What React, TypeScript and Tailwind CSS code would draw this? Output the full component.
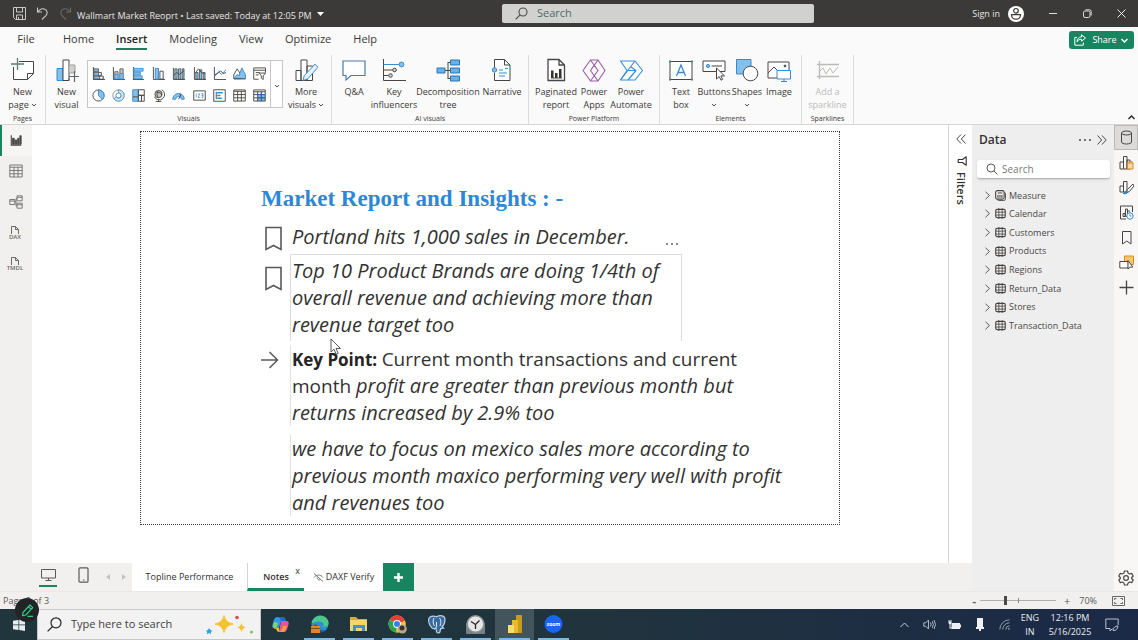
import React, { useState } from 'react';
import type { ReactNode } from 'react';

const DARK = '#484644';
const BLUE = '#3a8bc9';
const LIGHT = '#83c0ee';

type IconProps = { size?: number; box?: number; children: ReactNode };

function Icon({ size = 14, box = 14, children }: IconProps) {
  return (
    <svg
      width={size}
      height={size}
      viewBox={`0 0 ${box} ${box}`}
      fill="none"
      stroke={DARK}
      strokeWidth={1}
      aria-hidden="true"
      className="block shrink-0"
    >
      {children}
    </svg>
  );
}

function Chevron({ size = 6, className = '' }: { size?: number; className?: string }) {
  return (
    <svg width={size} height={size} viewBox="0 0 6 6" fill="none" stroke="currentColor" strokeWidth={0.9} aria-hidden="true" className={className}>
      <path d="M1 2l2 2 2-2" />
    </svg>
  );
}

/* ---------- Title bar ---------- */

function TitleBar() {
  return (
    <header className="flex h-[27px] items-center bg-[#3b3a38] text-[9px] text-[#e6e5e4]">
      <div className="flex w-[502px] shrink-0 items-center">
        <button aria-label="Save" className="ml-3 flex w-[14px] justify-center">
          <svg width="13" height="13" viewBox="0 0 13 13" fill="none" stroke="#c9c8c6" strokeWidth="1">
            <path d="M.5.5h12v12h-10l-2-2zM3.5.5v4.5h6V.5M3.5 12.500v-4.500h6v4.500M5.500 10v2" />
          </svg>
        </button>
        <button aria-label="Undo" className="ml-[9px] flex w-[14px] justify-center">
          <svg width="13" height="13" viewBox="0 0 13 13" fill="none" stroke="#c9c8c6" strokeWidth="1.1">
            <path d="M1.500.5v4.500H6M1.800 4.800C3.500 2 7 .8 9.500 2.600c2.400 1.800 2 4.400.2 6.200L6 12.500" />
          </svg>
        </button>
        <button aria-label="Redo" className="ml-[9px] flex w-[14px] justify-center">
          <svg width="13" height="13" viewBox="0 0 13 13" fill="none" stroke="#6b6a68" strokeWidth="1.1">
            <path d="M11.500.5v4.500H7M11.200 4.800C9.500 2 6 .8 3.500 2.600c-2.400 1.800-2 4.400-.2 6.200L7 12.500" />
          </svg>
        </button>
        <button className="ml-[5px] flex items-center whitespace-nowrap pt-1">
          Wallmart Market Reoprt • Last saved: Today at 12:05 PM
          <svg width="7" height="4" viewBox="0 0 7 4" className="mb-1 ml-[5px]" aria-hidden="true">
            <path d="M0 0h7L3.500 4z" fill="#fff" />
          </svg>
        </button>
      </div>
      <label className="flex h-[19px] w-[312px] items-center rounded-[2px] bg-[#d1d2cf] pl-[13px] text-[#5a5958]">
        <svg width="13" height="13" viewBox="0 0 13 13" fill="none" stroke="#4a4948" strokeWidth="1.1" aria-hidden="true">
          <circle cx="8" cy="5" r="4" />
          <path d="M5.100 7.900L.6 12.400" />
        </svg>
        <input
          aria-label="Search"
          placeholder="Search"
          className="ml-[9px] min-w-0 flex-1 bg-transparent text-[11px] outline-none placeholder:text-[#4f6a66]"
        />
      </label>
      <div className="ml-auto flex items-center">
        <button className="text-[9px]">Sign in</button>
        <button aria-label="Account" className="ml-2">
          <svg width="16" height="16" viewBox="0 0 16 16" fill="none" stroke="#3b3a38" strokeWidth="1.2" className="block">
            <circle cx="8" cy="8" r="8" fill="#fff" stroke="none" />
            <circle cx="8" cy="4.800" r="2.300" />
            <path d="M3.500 8.700h9c0 2.700-1.900 4.500-4.500 4.500s-4.500-1.800-4.500-4.500z" />
          </svg>
        </button>
        <button aria-label="Minimize" className="ml-3 flex w-[34px] justify-center">
          <span className="block h-px w-2 bg-[#dddcdb]" />
        </button>
        <button aria-label="Restore" className="flex w-[34px] justify-center">
          <svg width="9" height="9" viewBox="0 0 9 9" fill="none" stroke="#dddcdb">
            <rect x=".5" y="2" width="6.500" height="6.500" rx="1.500" />
            <path d="M2.500.8h4q1.700 0 1.700 1.700v4" />
          </svg>
        </button>
        <button aria-label="Close" className="flex w-[34px] justify-center">
          <svg width="9" height="9" viewBox="0 0 9 9" fill="none" stroke="#f0efee">
            <path d="M.5.5l8 8M8.500.5l-8 8" />
          </svg>
        </button>
      </div>
    </header>
  );
}

/* ---------- Menu ---------- */

const MENU = ['Home', 'Insert', 'Modeling', 'View', 'Optimize', 'Help'];

function MenuBar() {
  const [active, setActive] = useState('Insert');
  return (
    <nav className="flex h-[26px] items-center bg-[#fafafa] text-[11px] text-[#3a3938]">
      <button className="w-[52px] border-b-2 border-transparent text-center leading-[18px]">File</button>
      {MENU.map((m) => (
        <button key={m} onClick={() => setActive(m)} className="px-[11px]">
          <span
            className={
              m === active
                ? 'block border-b-2 border-[#1a7f5a] leading-[18px] font-semibold text-[#252423]'
                : 'block border-b-2 border-transparent leading-[18px]'
            }
          >
            {m}
          </span>
        </button>
      ))}
      <button className="mr-1 ml-auto flex h-[18px] w-[65px] items-center justify-center gap-[6px] rounded-[3px] bg-[#178560] text-[9px] text-white">
        <svg width="12" height="12" viewBox="0 0 12 12" fill="none" stroke="#fff" aria-hidden="true">
          <path d="M3 3.500H.8v7.700h8.500V8.500M7.500.8l4 3.200-4 3.200V5.300C5.500 5.200 4 6 3 7.800c.3-3 1.800-4.800 4.500-5z" strokeLinejoin="round" />
        </svg>
        Share
        <Chevron size={9} className="-ml-[3px]" />
      </button>
    </nav>
  );
}

/* ---------- Ribbon ---------- */

function Tool({ icon, lines, width, drop, disabled }: { icon: ReactNode; lines: string[]; width: string; drop?: boolean; disabled?: boolean }) {
  return (
    <button
      disabled={disabled}
      className={`flex shrink-0 flex-col items-center whitespace-nowrap text-[9px] leading-[13px] ${width} ${disabled ? 'text-[#bdbcbb]' : 'text-[#3a3938]'}`}
    >
      <span className="mb-[3px] block">{icon}</span>
      <span>{lines[0]}</span>
      {(lines[1] || drop) && (
        <span className="flex h-[13px] items-center gap-[2px]">
          {lines[1]}
          {drop && <Chevron size={6} />}
        </span>
      )}
    </button>
  );
}

function Group({ label, children, width, pad = '' }: { label: string; children: ReactNode; width: string; pad?: string }) {
  return (
    <section className={`mt-[2px] flex shrink-0 flex-col justify-between border-r border-[#dcdbda] ${width}`}>
      <div className={`flex items-start pt-[3px] ${pad}`}>{children}</div>
      <h2 className="text-center text-[7px] leading-[11px] text-[#3a3938]">{label}</h2>
    </section>
  );
}

const GALLERY: { name: string; art: ReactNode }[] = [
  { name: 'Stacked bar chart', art: <><path d="M1.500 0v13.500H14" /><path d="M2 2h5v3H2zM2 6h8v3H2zM2 10h10v3H2z" fill={LIGHT} stroke={DARK} strokeWidth=".8" /><path d="M7 6h3v3H7zM8 10h4v3H8z" fill="#fff" strokeWidth=".8" /></> },
  { name: 'Stacked column chart', art: <><path d="M1.500 0v13.500H14" /><path d="M3 5h3.500v8H3zM8.500 2H12v11H8.500z" fill="#c8c6c4" strokeWidth=".8" /><path d="M3 8h3.500v5H3zM8.500 7H12v6H8.500z" fill={LIGHT} stroke={BLUE} strokeWidth=".8" /></> },
  { name: 'Clustered bar chart', art: <><path d="M1.500 0v14" /><path d="M2 1.500h10v3H2zM2 5.500h7v3H2zM2 9.500h9v3H2z" fill={LIGHT} stroke={BLUE} strokeWidth=".9" /><path d="M1.500 13.500H13" /></> },
  { name: 'Clustered column chart', art: <><path d="M1.500 0v13.500H14" /><path d="M3.500 1.500H7V13H3.500z" fill={LIGHT} stroke={BLUE} /><path d="M8.500 4.500H12V13H8.500z" fill="#fff" /></> },
  { name: '100% stacked column chart', art: <><path d="M1.500 1v12.500H14" /><path d="M3 2h2.500v11H3zM7 2h2.500v11H7zM11 2h2v11h-2z" fill={LIGHT} strokeWidth=".8" /><path d="M2 9l3-3 3 2 5-4" /></> },
  { name: 'Line and column chart', art: <><path d="M1.500 0v13.500H14" /><path d="M3 6h2.500v7H3zM7 3h2.500v10H7zM11 6h2v7h-2z" fill={LIGHT} strokeWidth=".8" /><path d="M2 7l4-5 3 4 4 1" /></> },
  { name: 'Line chart', art: <><path d="M1.500 0v13.500H14" /><path d="M2 10l4-5 3 3 5-5" stroke={BLUE} /><path d="M2 8l3-1 3-3 3 3 3-1" /></> },
  { name: 'Area chart', art: <><path d="M.8 12.500v-4L4.500 2 8 7.500v5z" fill="#fff" strokeLinejoin="round" /><path d="M1 12.500L4.500 8l2 1.500L9.500 1l4 7.500v4z" fill={LIGHT} stroke={BLUE} strokeLinejoin="round" /><path d="M1 12.800h12.500" /></> },
  { name: 'Slicer', art: <><path d="M13.500 6V1H.8v12.200H6M.8 3.500h12.700M3 6h4M3 8.500h3" /><path d="M6.500 6.500h7L11 9.500v4L9 12V9.500z" fill="#fff" /></> },
  { name: 'Pie chart', art: <><circle cx="7" cy="7" r="6" fill="#fff" /><path d="M7 1v6l4.200 4.300A6 6 0 0 0 7 1z" fill={LIGHT} stroke={BLUE} /></> },
  { name: 'Donut chart', art: <><circle cx="7" cy="7" r="6" stroke="#8a8886" /><circle cx="7" cy="7" r="2.800" stroke={BLUE} /><path d="M7 1a6 6 0 1 1-5 9.300l2.600-1.700A2.900 2.900 0 1 0 7 4.200z" stroke={BLUE} fill="#d4e9f8" strokeWidth=".8" /></> },
  { name: 'Treemap', art: <><path d="M.8.8h6v12.400h-6z" fill={LIGHT} stroke={BLUE} /><path d="M6.800.8h6.400v6H6.800zM6.800 6.800h3.400v6.400H6.800zM10.200 6.800h3v6.400h-3zM.8 8.500h6" /></> },
  { name: 'Map', art: <><circle cx="7" cy="5.500" r="3.900" fill="#c8c6c4" /><path d="M7 1.600c-2.200 2.300-2 5.500 0 7.800M5 4h4l1.500 2.500" /><path d="M10.500.8a5.800 5.800 0 1 1-8 7.500M7 11v2.300M4 13.400h6" /></> },
  { name: 'Gauge', art: <><path d="M.8 11a6.200 6.200 0 0 1 12.400 0H10a3 3 0 0 0-6 0z" fill={LIGHT} stroke={BLUE} /><path d="M7 11l2.500-4.500M8.500 4.900l.8 2.800" /></> },
  { name: 'Card', art: <><path d="M.8 2h12.400v10H.8z" /><path d="M3.500 5v4M5.500 5.200h1.700L5.500 9h2M9 5h1.800v4H9M9.200 7h1.600" stroke={BLUE} strokeWidth=".8" /></> },
  { name: 'Multi-row card', art: <><path d="M.8.8h12.400v12.400H.8zM3.500 3v8" /><path d="M4.500 4h6M4.500 7h3.500M4.500 10h5" stroke={BLUE} strokeWidth="1.600" /></> },
  { name: 'Table', art: <path d="M.8 1h12.400v12H.8zM.8 2.500h12.400M.8 6h12.400M.8 9.500h12.400M5 2.500V13M9 2.500V13" /> },
  { name: 'Matrix', art: <><path d="M5 6h8v7H5z" fill={LIGHT} stroke="none" /><path d="M.8 1h12.400v12H.8zM.8 3h12.400M.8 6h12.400M.8 9.500h12.400M5 2.500V13M9 2.500V13" /><path d="M5 6h8M9 4v9M5 9.500h8" stroke="#1f6db5" /></> },
];

function Gallery() {
  return (
    <div className="mt-[2px] flex h-[48px] w-[196px] shrink-0 border border-[#c8c6c4] bg-white">
      <div className="grid flex-1 grid-cols-9 py-px">
        {GALLERY.map((g) => (
          <button key={g.name} aria-label={g.name} className="flex items-center justify-center">
            <Icon size={13}>{g.art}</Icon>
          </button>
        ))}
      </div>
      <button aria-label="More gallery items" className="flex w-3 items-center justify-center border-l border-[#c8c6c4] pt-1 text-[#3a3938]">
        <Chevron size={6} />
      </button>
    </div>
  );
}

function Ribbon() {
  return (
    <div className="flex h-[72px] items-stretch border-b border-[#d6d5d4] bg-[#fafafa]">
      <Group label="Pages" width="w-[46px]">
        <Tool width="w-[45px]" lines={['New', 'page']} drop icon={
          <Icon size={24} box={24}><path d="M8 3.500h14.500v12l-6 6h-14V9" fill="#fff" /><path d="M22.500 15.500h-6v6" /><path d="M6.500 0v12M0 6h13" stroke="#5d7c73" strokeWidth="1.300" /></Icon>
        } />
      </Group>
      <Group label="Visuals" width="w-[286px]">
        <Tool width="w-[41px]" lines={['New', 'visual']} icon={
          <Icon size={24} box={24}><path d="M2 10.500h6v12H2z" fill={LIGHT} stroke={BLUE} /><path d="M8 2h6v20.500H8z" fill="#fff" /><path d="M14 7h6v8h-6z" fill="#d2d0ce" stroke="#a19f9d" /><path d="M14 20v2.500M19.500 13v11M14 18.500h10" stroke="#5d6a70" strokeWidth="1.200" /></Icon>
        } />
        <Gallery />
        <Tool width="w-[46px]" lines={['More', 'visuals']} drop icon={
          <Icon size={24} box={24}><path d="M2 12.500h5v10H2zM7 2h6v20.500H7zM13 8h5.500v14.500H13z" fill="#fff" /><path d="M9 22.500l1.300-5L21 6.200l3 3L13.800 20.800z" fill="#e4f1fb" stroke={BLUE} /></Icon>
        } />
      </Group>
      <Group label="AI visuals" width="w-[197px]" pad="pl-[2px]">
        <Tool width="w-[40px]" lines={['Q&A']} icon={
          <Icon size={24} box={24}><path d="M1 3h22v14.500H9l-5 4.500v-4.500H1z" fill="#fff" stroke="#4a7ba6" strokeWidth="1.200" /></Icon>
        } />
        <Tool width="w-[40px]" lines={['Key', 'influencers']} icon={
          <Icon size={24} box={24}><path d="M1.500 1v21.500H24" /><path d="M1.500 6.500h16" stroke={BLUE} /><circle cx="19.500" cy="6.500" r="2.400" fill={LIGHT} stroke={BLUE} /><path d="M1.500 12h9M1.500 17.500h5" /><circle cx="12.500" cy="12" r="1.800" fill="#d2d0ce" /><circle cx="8.500" cy="17.500" r="1.800" fill="#d2d0ce" /></Icon>
        } />
        <Tool width="w-[68px]" lines={['Decomposition', 'tree']} icon={
          <Icon size={24} box={24}><path d="M8 12.500h7M12 4v17M12 4.500h3M12 20.500h3" /><path d="M1 10h8v5H1zM14.500 2h9v5h-9zM14.500 10h9v5h-9zM14.500 18h9v5h-9z" fill="#6ab1e8" stroke="#2b76b5" /></Icon>
        } />
        <Tool width="w-[40px]" lines={['Narrative']} icon={
          <Icon size={24} box={24}><path d="M4.500 10V1.500h10l5.500 5.500v15.500H4.500V15M14.500 1.500V7H20" fill="#fff" /><circle cx="4.500" cy="12" r="2.200" fill={LIGHT} stroke={BLUE} /><path d="M9 12h4M15 10.500h3M9 15h8M9 18h6" stroke={BLUE} /></Icon>
        } />
      </Group>
      <Group label="Power Platform" width="w-[131px]" pad="pl-[5px]">
        <Tool width="w-[44px]" lines={['Paginated', 'report']} icon={
          <Icon size={24} box={24}><path d="M4 1.500h11l5.500 5.500v15.500H4zM15 1.500V7h5.500" fill="#fff" strokeWidth="1.300" /><path d="M7 12.500h2.500V20H7zM11 15h2.500v5H11zM15 11h2.500v9H15z" fill="#323130" stroke="none" /><path d="M7 20h11" /></Icon>
        } />
        <Tool width="w-[32px]" lines={['Power', 'Apps']} icon={
          <Icon size={24} box={24}><g stroke="#9b59a6" strokeWidth="1.100" strokeLinejoin="round"><path d="M8.500 2h7.500l7 10.500-7 10.500H8.500L1 12.500z" /><path d="M8.500 2l7.500 10.500L8.500 23M16 2L8.500 12.500 16 23M12.200 7.300l3.800 5.200-3.800 5.200-3.700-5.200z" /></g></Icon>
        } />
        <Tool width="w-[42px]" lines={['Power', 'Automate']} icon={
          <Icon size={24} box={24}><g stroke="#3a93d8" strokeWidth="1.200" strokeLinejoin="round"><path d="M1.500 3H16l7.500 9.500L16 22H1.500L8 12.500z" /><path d="M16 3L1.500 22M8 12.500h8M12 9l5 3.500L9 22" /></g></Icon>
        } />
      </Group>
      <Group label="Elements" width="w-[142px]" pad="pl-[5px]">
        <Tool width="w-[32px]" lines={['Text', 'box']} icon={
          <Icon size={24} box={24}><path d="M1 3.500h22v18H1z" fill="#fff" /><path d="M7.500 18L12 7l4.500 11M9 14.500h6" stroke={BLUE} strokeWidth="1.300" /><path d="M0 2.500h2v2H0zM22 2.500h2v2h-2zM0 20.500h2v2H0zM22 20.500h2v2h-2z" fill="#4f7f8f" stroke="none" /></Icon>
        } />
        <Tool width="w-[34px]" lines={['Buttons']} drop icon={
          <Icon size={24} box={24}><path d="M1 3h22v10.500H1z" fill="#fff" /><circle cx="6" cy="8" r="1.600" fill={LIGHT} stroke={BLUE} /><path d="M9.500 8H20" /><path d="M14.500 10v11l2.700-2.500 1.800 3.700 1.600-.8-1.700-3.500h3.600z" fill="#fff" /></Icon>
        } />
        <Tool width="w-[32px]" lines={['Shapes']} drop icon={
          <Icon size={24} box={24}><path d="M1.500 1.500h14.500v14.500H1.500z" fill={LIGHT} stroke={BLUE} /><circle cx="15.500" cy="15.500" r="7.300" fill="#fff" /></Icon>
        } />
        <Tool width="w-[32px]" lines={['Image']} icon={
          <Icon size={24} box={24}><path d="M1 4h21v16H1z" fill="#fff" /><path d="M1 15l6-6 7 7" /><circle cx="18" cy="8" r=".9" fill={DARK} /><path d="M10 12.500h13.500v8.500H10zM14 23.500h6M17 21v2.500" fill="#fff" stroke={BLUE} /></Icon>
        } />
      </Group>
      <Group label="Sparklines" width="w-[52px]">
        <Tool width="w-[51px]" disabled lines={['Add a', 'sparkline']} icon={
          <Icon size={24} box={24}><g stroke="#bdbbb9"><path d="M3.500 3v18M1 6.500h22M1 18.500h22" strokeWidth="1.300" /><path d="M4 13l3-3 3 6 4-6 3 5 5-6" /></g></Icon>
        } />
      </Group>
      <button aria-label="Collapse ribbon" className="mr-[2px] mb-[2px] ml-auto self-end text-[#252423]">
        <Chevron size={9} className="rotate-180" />
      </button>
    </div>
  );
}

/* ---------- View switcher ---------- */

const VIEWS: { name: string; art: ReactNode }[] = [
  { name: 'Report view', art: <><path d="M1.500 1.500v11.500H13" strokeWidth="1.300" /><path d="M3 5h2v7H3zM6 7h2v5H6zM9 5h1.500v7H9zM11.500 2h1.500v10h-1.500z" fill={DARK} /></> },
  { name: 'Table view', art: <path d="M.8 1h12.400v12H.8zM.8 3.200h12.400M.8 6.500h12.400M.8 9.800h12.400M5 3v10M9 3v10" stroke="#7b7977" /> },
  { name: 'Model view', art: <path d="M.8 4.500h5v5h-5zM8 .8h5.200v5H8zM8 8.200h5.200v5H8zM.8 6h5M8 2.300h5.200M8 9.800h5.200M5.800 7H7V3.500h1M7 7v4h1" stroke="#7b7977" /> },
];

function ViewRail() {
  return (
    <nav className="flex w-8 shrink-0 flex-col bg-[#f1f0ef]">
      {VIEWS.map((v, i) => (
        <button
          key={v.name}
          aria-label={v.name}
          className={`flex h-[31px] items-center justify-center border-l-2 pr-[2px] pb-[2px] ${i === 0 ? 'border-[#178560] bg-[#f6f5f4]' : 'border-transparent'}`}
        >
          <Icon size={i === 0 ? 12 : 14}>{v.art}</Icon>
        </button>
      ))}
      {['DAX', 'TMDL'].map((t) => (
        <button key={t} className="flex h-[31px] flex-col items-center justify-center pr-[2px] pb-[2px] text-[6px] leading-[6px] font-semibold text-[#6b6967]">
          <svg width="10" height="8" viewBox="0 0 10 8" fill="none" stroke="#6b6967" aria-hidden="true">
            <path d="M1.500 8V.5h4l3 3V8M5.500.5v3h3" />
          </svg>
          {t}
        </button>
      ))}
    </nav>
  );
}

/* ---------- Report page ---------- */

function BookmarkGlyph() {
  return (
    <svg width="24" height="25" viewBox="0 0 24 25" fill="none" stroke="#5a5958" strokeWidth="1.600" aria-hidden="true">
      <path d="M5 1.500h15v22l-7.500-4-7.500 4z" />
    </svg>
  );
}

function ArrowGlyph() {
  return (
    <svg width="24" height="18" viewBox="0 0 24 18" fill="none" stroke="#5a5958" strokeWidth="1.500" aria-hidden="true">
      <path d="M0 9h16M8.500 1l8 8-8 8" />
    </svg>
  );
}

function NoteRow({ marker, children, className }: { marker?: ReactNode; children: ReactNode; className: string }) {
  return (
    <div className={`flex ${className}`}>
      <div className="w-[29px] shrink-0">{marker}</div>
      {children}
    </div>
  );
}

function ReportPage() {
  return (
    <article className="relative mx-auto mt-[6px] aspect-video w-full max-w-[700px] border border-dotted border-[#3a3938] pt-[53px] pl-[120px] text-[20px] leading-[27px] text-[#333231] italic">
      <h1 className="font-['Liberation_Serif',serif] text-[23px] font-bold text-[#2b88d8] not-italic">Market Report and Insights : -</h1>
      <NoteRow className="mt-[11px]" marker={<div className="pt-[3px]"><BookmarkGlyph /></div>}>
        <div className="flex w-[391px] justify-between pr-[3px] pl-[2px]">
          <p>Portland hits 1,000 sales in December.</p>
          <button aria-label="More options" className="flex gap-[3px] pt-[20px]">
            <span className="size-[2px] bg-[#8a8886]" />
            <span className="size-[2px] bg-[#8a8886]" />
            <span className="size-[2px] bg-[#8a8886]" />
          </button>
        </div>
      </NoteRow>
      <NoteRow className="mt-[3px]" marker={<div className="pt-3"><BookmarkGlyph /></div>}>
        <p className="w-[392px] border-t border-r border-l border-[#dcdbda] pt-[2px] pb-[3px] pl-px">
          Top 10 Product Brands are doing 1/4th of overall revenue and achieving more than revenue target too
        </p>
      </NoteRow>
      <NoteRow className="mt-1" marker={<div className="pt-[6px]"><ArrowGlyph /></div>}>
        <p className="w-[470px] border-l border-[#e3e2e1] pl-px">
          <strong className="text-[17px] leading-none text-[#252423] not-italic">Key Point: </strong>
          <span className="text-[19px] leading-none not-italic">Current month transactions and current month </span>
          profit are greater than previous month but returns increased by 2.9% too
        </p>
      </NoteRow>
      <NoteRow className="mt-[9px]">
        <p className="w-[510px] border-l border-[#e3e2e1] pl-px">
          we have to focus on mexico sales more according to previous month maxico performing very well with profit and revenues too
        </p>
      </NoteRow>
      <svg width="12" height="18" viewBox="0 0 12 18" className="absolute top-[206px] left-[189px]" aria-hidden="true">
        <path d="M1 1v13l3-2.800 2.200 5 2-.9L6 10.500h4.500z" fill="#fff" stroke="#5a5958" />
      </svg>
    </article>
  );
}

/* ---------- Filters and Data panes ---------- */

function DoubleChevron({ flip }: { flip?: boolean }) {
  return (
    <svg width="10" height="10" viewBox="0 0 10 10" fill="none" stroke="#4a4948" className={flip ? 'block rotate-180' : 'block'} aria-hidden="true">
      <path d="M5 .5L.8 5 5 9.500M9.500.5L5.300 5l4.200 4.500" />
    </svg>
  );
}

function FiltersPane() {
  return (
    <aside className="flex w-6 shrink-0 flex-col items-center border-l border-[#d8d7d6] bg-white pt-[9px]">
      <button aria-label="Expand filters"><DoubleChevron /></button>
      <svg width="10" height="10" viewBox="0 0 10 10" fill="none" stroke="#323130" strokeWidth="1.100" className="mt-3 ml-[3px]" aria-hidden="true">
        <path d="M9.200.8v8.400L5.500 6.500H1.200v-3h4.300z" strokeLinejoin="round" />
      </svg>
      <h2 className="mt-[6px] text-[11px] leading-[14px] font-semibold text-[#323130] [writing-mode:vertical-rl]">Filters</h2>
    </aside>
  );
}

const TABLES = ['Measure', 'Calendar', 'Customers', 'Products', 'Regions', 'Return_Data', 'Stores', 'Transaction_Data'];

function DataPane() {
  return (
    <aside className="w-[142px] shrink-0 bg-[#efeeee]">
      <div className="flex h-[29px] items-center pr-[7px] pl-[7px]">
        <h2 className="flex-1 text-[12px] font-semibold text-[#323130]">Data</h2>
        <button aria-label="Data options" className="mr-[6px] flex gap-[3px]">
          <span className="size-[2px] rounded-full bg-[#4a4948]" />
          <span className="size-[2px] rounded-full bg-[#4a4948]" />
          <span className="size-[2px] rounded-full bg-[#4a4948]" />
        </button>
        <button aria-label="Collapse data pane"><DoubleChevron flip /></button>
      </div>
      <label className="mt-[6px] mr-1 ml-[5px] flex h-[19px] items-center rounded-[3px] border-b border-[#b5b4b3] bg-white pl-[9px] shadow-sm">
        <svg width="12" height="12" viewBox="0 0 12 12" fill="none" stroke="#5a5958" aria-hidden="true">
          <circle cx="5" cy="5" r="4" />
          <path d="M8 8l3.500 3.500" />
        </svg>
        <input aria-label="Search data" placeholder="Search" className="ml-1 min-w-0 flex-1 bg-transparent text-[10px] outline-none placeholder:text-[#7a7978]" />
      </label>
      <ul className="mt-[7px] flex h-[149px] flex-col text-[9px] text-[#4a4948]">
        {TABLES.map((t, i) => (
          <li key={t} className="flex flex-1">
            <button className="flex items-center pl-3">
              <svg width="7" height="9" viewBox="0 0 7 9" fill="none" stroke="#5a5958" aria-hidden="true">
                <path d="M1.500.8L5.500 4.500l-4 3.700" />
              </svg>
              <span className="mr-[3px] ml-1 block">
                {i === 0 ? (
                  <Icon size={11} box={12}><rect x="2.500" y="2.500" width="9" height="9" rx="2" /><rect x=".7" y=".7" width="9.300" height="9.300" rx="2" fill="#efeeee" strokeWidth="1.200" /><path d="M3 3.200h5M3.200 5.500v3M5.400 5.500v3M7.500 5.500v3" strokeWidth="1.200" /></Icon>
                ) : (
                  <Icon size={11} box={12}><rect x=".8" y="1.500" width="10.400" height="9" rx="1.500" strokeWidth="1.200" /><path d="M4.200 0v12M7.800 0v12M.8 4.500h10.400M.8 7.700h10.400" strokeWidth=".9" /></Icon>
                )}
              </span>
              {t}
            </button>
          </li>
        ))}
      </ul>
    </aside>
  );
}

const PANES: { name: string; art: ReactNode }[] = [
  { name: 'Data', art: <><ellipse cx="7.500" cy="3" rx="5" ry="2" /><path d="M2.500 3v9c0 1.100 2.200 2 5 2s5-.9 5-2V3" /></> },
  { name: 'Build a visual', art: <><path d="M1 7h3.500v7H1zM4.500 1.500H8V14H4.500zM8 5h3v9H8z" /><path d="M8.500 8h5.500v6H8.500zM10 8V6.500h3V8" fill="#f8d8ac" stroke="#d98a2b" /></> },
  { name: 'Format', art: <><path d="M1 6h3.500v6H1zM4.500 1.500H8V12H4.500z" /><path d="M14 4L8.500 9.500 7 13l3.300-1.500L15 6z" fill="#fff" /><path d="M4 13.500c2 .5 3.800.2 4.800-1.200L7.500 10.800C6 11 6.500 13 4 13.500z" fill="#3a8bc9" stroke="#2b76b5" /></> },
  { name: 'Performance analyzer', art: <><path d="M13.500 7V1h-12v13H7" /><path d="M4 8.500h2v3H4zM6.500 4h2v7.500h-2zM9 6h2" /><circle cx="11" cy="11" r="3.200" fill="#fff" stroke={BLUE} /><path d="M11 9.500V11h1.500M11 6.800v1" stroke={BLUE} /></> },
  { name: 'Bookmarks', art: <path d="M3.500 1.500h8.500v12.500l-4.200-3-4.300 3z" /> },
  { name: 'Selection', art: <><path d="M5.500 1h9v8.500h-9z" fill="#f8c66a" stroke="#d98a2b" /><path d="M.8 6.500h8.500v6.500H.8z" fill="#fff" /><path d="M9 5.500v8.500l2-1.800 2.800-.2z" fill="#fff" /></> },
  { name: 'Add pane', art: <path d="M7.500.5v14M.5 7.500h14" strokeWidth="1.300" /> },
];

function PaneRail() {
  return (
    <nav className="flex w-6 shrink-0 flex-col bg-[#f8f7f6]">
      {PANES.map((p, i) => (
        <button
          key={p.name}
          aria-label={p.name}
          className={`flex h-[25px] items-center justify-center pb-px ${i === 0 ? 'border border-[#b9b8b7] bg-[#dcdbda]' : ''}`}
        >
          <Icon size={15} box={15}>{p.art}</Icon>
        </button>
      ))}
      <button aria-label="Settings" className="mt-auto mb-[5px] flex justify-center">
        <svg width="16" height="16" viewBox="0 0 16 16" fill="none" stroke="#4a4948" strokeWidth="1.200" strokeLinejoin="round">
          <path d="M6.500 1h3l.6 2.100 1.500.9 2.100-.6 1.500 2.600L13.700 7.500v1l1.500 1.500-1.500 2.600-2.100-.6-1.500.9L9.500 15h-3l-.6-2.100-1.500-.9-2.100.6L.8 10l1.500-1.500v-1L.8 6l1.500-2.600 2.100.6 1.500-.9z" />
          <circle cx="8" cy="8" r="2.400" />
        </svg>
      </button>
    </nav>
  );
}

/* ---------- Page tabs ---------- */

function PageTabs() {
  return (
    <div className="flex h-7 shrink-0 items-stretch bg-[#f1f0ef] text-[9px] text-[#323130]">
      <button aria-label="Desktop layout" className="ml-[7px] flex w-[18px] flex-col items-center justify-between pt-[6px] pb-1">
        <svg width="15" height="12" viewBox="0 0 15 12" fill="none" stroke="#5a5958" aria-hidden="true">
          <path d="M.5.5h14v8.500H.5zM7.500 9v2.500M4.500 11.500h6" />
        </svg>
        <span className="block h-[2px] w-full bg-[#178560]" />
      </button>
      <button aria-label="Mobile layout" className="ml-5 flex w-3 justify-center pt-1">
        <svg width="11" height="16" viewBox="0 0 11 16" fill="none" stroke="#5a5958" strokeWidth="1.200" aria-hidden="true">
          <rect x="1" y=".8" width="9" height="14.400" rx="1" />
          <path d="M5 13h1.500" />
        </svg>
      </button>
      <button aria-label="Previous page" className="ml-[11px] flex w-4 items-center justify-center">
        <svg width="4" height="6" viewBox="0 0 4 6"><path d="M4 0v6L0 3z" fill="#c4c3c2" /></svg>
      </button>
      <button aria-label="Next page" className="flex w-4 items-center justify-center">
        <svg width="4" height="6" viewBox="0 0 4 6"><path d="M0 0v6l4-3z" fill="#c4c3c2" /></svg>
      </button>
      <button className="w-[115px] bg-white">Topline Performance</button>
      <div className="relative flex">
        <button className="w-[57px] border-b-[3px] border-l border-b-[#178560] border-l-[#d6d5d4] bg-white pt-[3px] font-semibold">Notes</button>
        <button aria-label="Close Notes" className="absolute top-[3px] right-1 text-[9px] leading-[10px]">x</button>
      </div>
      <button className="flex w-[79px] items-center justify-center gap-[2px] bg-white">
        <svg width="11" height="9" viewBox="0 0 11 9" fill="none" stroke="#7b7977" aria-hidden="true">
          <path d="M1 4.500C3 1.500 7.500 1 10 4.500M1 .5l9 8M4 4.500c0 2 2 3 3.500 2" />
        </svg>
        DAXF Verify
      </button>
      <button aria-label="New page" className="flex w-[31px] items-center justify-center bg-[#178560]">
        <svg width="9" height="9" viewBox="0 0 9 9" stroke="#fff" strokeWidth="2.400"><path d="M4.500 0v9M0 4.500h9" /></svg>
      </button>
    </div>
  );
}

function StatusBar() {
  const [zoom, setZoom] = useState(33);
  return (
    <div className="flex h-[18px] shrink-0 items-center border-t border-[#e9e8e7] bg-[#f1f0ef] pr-[13px] pl-[3px] text-[9px] text-[#5a5958]">
      <span className="flex-1">Page 2 of 3</span>
      <button aria-label="Zoom out" className="text-[11px] leading-none font-bold">-</button>
      <div className="relative mx-[4px] flex h-3 w-[76px] items-center">
        <input
          type="range"
          aria-label="Zoom"
          value={zoom}
          onChange={(e) => setZoom(Number(e.target.value))}
          className="h-px w-full appearance-none bg-[#b0afae] [&::-webkit-slider-thumb]:h-[9px] [&::-webkit-slider-thumb]:w-[3px] [&::-webkit-slider-thumb]:appearance-none [&::-webkit-slider-thumb]:bg-[#4a4948]"
        />
        <span className="absolute left-1/2 h-[5px] w-px bg-[#8a8988]" />
      </div>
      <button aria-label="Zoom in" className="ml-1 text-[11px] leading-none">+</button>
      <span className="mr-[15px] ml-[9px]">70%</span>
      <button aria-label="Fit to page">
        <svg width="13" height="10" viewBox="0 0 13 10" fill="none" stroke="#6b6967" className="block">
          <path d="M.5.5h12v9H.5zM2.500 4V2.500h2M8.500 2.500h2V4M10.500 6v1.500h-2M4.500 7.500h-2V6" />
        </svg>
      </button>
    </div>
  );
}

/* ---------- Taskbar ---------- */

const APPS: { name: string; open: boolean; art: ReactNode }[] = [
  { name: 'Copilot', open: false, art: <><path d="M6 2h5l-3 11H3Q.5 13 1.500 9.500l1.500-5Q4 2 6 2z" fill="#2f9be8" /><path d="M3 7l-1 4q0 3 3 3l2-6z" fill="#7ed957" /><path d="M5 2h7q2 0 2.500 2l.5 2H10q-1-4-5-4z" fill="#2563d9" /><path d="M10 6h5.500q3 0 2 3.500l-1.500 5Q15 17 13 17H8z" fill="#e6559d" /><path d="M8 17q2 0 3-3l1-3h4l-1.500 4Q14 17 12 17z" fill="#f59e3b" /><path d="M8 13h-3l.5 2q.5 2 3 2z" fill="#f5b83b" /></> },
  { name: 'Edge', open: true, art: <><circle cx="10" cy="9" r="8.500" fill="#2b8fd6" /><path d="M1.500 8C3 2 8 .3 11.500.8c5 .7 7.500 4.500 7 8.200-.5 2.500-3 3-5.500 2.500 1.500-2 0-5-3.500-5-3.500-.2-6.500 2-8 1.500z" fill="#4cc98a" /><path d="M7 10c0 4 4 6 8 5-2 2.500-6 3-9 1.500z" fill="#1557a8" /><path d="M1 11h9v7H1z" fill="#d9892b" /><path d="M1 13h9v1H1zM4 9.500h3V11H4z" fill="#8a4b12" /></> },
  { name: 'File Explorer', open: true, art: <><path d="M1 2h6l2 2h9v4H1z" fill="#e3a72f" /><path d="M1 5h17v11H1z" fill="#f8d568" /><path d="M4 10h12v6h-3v-3H7v3H4z" fill="#3d93d6" /></> },
  { name: 'Chrome', open: true, art: <><circle cx="9" cy="9" r="8.500" fill="#e8eaed" /><path d="M9 9L1.600 4.800A8.500 8.500 0 0 1 17 6z" fill="#e34133" /><path d="M9 9L1.600 4.800A8.500 8.500 0 0 0 8.500 17.500z" fill="#2fa24f" /><path d="M9 9l8-3a8.500 8.500 0 0 1-8.500 11.500z" fill="#f9c52d" /><circle cx="9" cy="9" r="3.900" fill="#fff" /><circle cx="9" cy="9" r="3" fill="#3b7de8" /><circle cx="14.300" cy="14" r="4.500" fill="#b5a88c" /><circle cx="14" cy="13" r="2.500" fill="#3a332b" /></> },
  { name: 'PostgreSQL', open: true, art: <><path d="M3 2c3-2 6 0 7-.5C13 0 18 .5 18 4.500c0 3-2 6.500-3 7.500l1.500 1-3 .8L13 17q-2 2-3.500 0L9 12.500 7.500 14 5 13C2.500 11 0 4.500 3 2z" fill="#386a9c" stroke="#b9cfe3" strokeWidth="1.200" /><path d="M7 3c-1.500 2-1 6 .5 8M12.500 3c2 2 1.500 5 .5 8M9.500 7v5" fill="none" stroke="#dce9f4" /></> },
  { name: 'Alarms & Clock', open: true, art: <><rect x="0" y="8" width="19" height="11" rx="1" fill="#758087" /><circle cx="9.500" cy="9" r="8.300" fill="#e6e6e6" stroke="#8c9396" strokeWidth="1.400" /><path d="M5 6.500l4.500 3 4-4M9.500 9.500V14" fill="none" stroke="#252423" strokeWidth="1.300" /></> },
  { name: 'Power BI', open: true, art: <><path d="M11 0h5q1 0 1 1v17h-6z" fill="#c99a1c" /><path d="M7 5h5q1 0 1 1v12H7z" fill="#e8bb2c" /><path d="M3 10h5q1 0 1 1v7H3z" fill="#f7dc6f" /></> },
  { name: 'Zoom', open: true, art: <circle cx="9.500" cy="9" r="9" fill="#1b63f2" /> },
];

function Taskbar() {
  return (
    <footer className="relative flex h-[31px] shrink-0 items-stretch bg-linear-to-r from-[#20353c] via-[#20343d] to-[#1b2947] text-[9px] text-[#e9edf0]">
      <button aria-label="Start" className="flex w-[37px] items-center justify-center">
        <svg width="12" height="12" viewBox="0 0 12 12" fill="#e6ecef"><path d="M0 1.800l5.500-.9v4.700H0zM6.200.8L12 0v5.600H6.200zM0 6.300h5.500V11L0 10.200zM6.200 6.300H12V12l-5.800-.9z" /></svg>
      </button>
      <button aria-label="Annotate" className="absolute -top-[11px] left-[15px] flex size-6 items-center justify-center rounded-full bg-[#222426]">
        <svg width="13" height="13" viewBox="0 0 13 13" fill="none" stroke="#2fc98a" strokeWidth="1.200" strokeLinejoin="round">
          <path d="M2 8.500L9 1l2.800 2.600L4.800 11l-3.300.7zM7.500 2.700l2.700 2.600M6.500 12.300H12" />
        </svg>
      </button>
      <label className="flex w-[224px] items-center border border-[#c9c8c7] bg-[#f2f2f2] pl-[9px]">
        <svg width="15" height="15" viewBox="0 0 15 15" fill="none" stroke="#252423" strokeWidth="1.200" aria-hidden="true">
          <circle cx="9" cy="5.800" r="5" />
          <path d="M5.500 9.500L.6 14.400" />
        </svg>
        <input aria-label="Type here to search" placeholder="Type here to search" className="ml-[9px] min-w-0 flex-1 bg-transparent text-[11px] outline-none placeholder:text-[#3f3e3d]" />
        <svg width="48" height="20" viewBox="0 0 48 20" className="mr-[6px]" aria-hidden="true">
          <path d="M18 .5c1.300 5 3.500 7.200 9 8.500-5.500 1.300-7.700 3.500-9 8.500-1.300-5-3.500-7.200-9-8.500 5.500-1.300 7.700-3.500 9-8.500z" fill="#f6c12f" stroke="#f6c12f" strokeLinejoin="round" />
          <path d="M35.500 8c.7 2.700 1.800 3.800 4.500 4.500-2.700.7-3.800 1.800-4.500 4.500-.7-2.700-1.800-3.800-4.500-4.500 2.700-.7 3.800-1.800 4.500-4.500z" fill="#f6c12f" />
          <path d="M3 13l1.300 2 2.200.7-1.700 1.400.2 2.200L3 18.100l-2.200 1.200.4-2.200L0 15.400l2-.4z" fill="#2ba3dd" />
          <circle cx="31" cy="2.500" r="1.800" fill="#dd4f43" />
          <circle cx="45.500" cy="17" r="1.500" fill="#84bd4a" />
        </svg>
      </label>
      {APPS.map((a) => (
        <button
          key={a.name}
          aria-label={a.name}
          className={`relative flex w-[39px] items-center justify-center border-b-2 ${a.name === 'Power BI' ? 'bg-[#43555c]' : ''} border-transparent pt-[2px]`}
        >
          <svg width="19" height="19" viewBox="0 0 19 19" aria-hidden="true">{a.art}</svg>
          {a.name === 'Zoom' && <span className="absolute text-[5px] leading-none font-bold text-white">zoom</span>}
          {a.open && <span className="absolute inset-x-[4px] -bottom-[2px] h-[2px] bg-[#7db7e4]" />}
        </button>
      ))}
      <div className="ml-auto flex items-center pr-[19px]">
        <button aria-label="Show hidden icons" className="flex w-[25px] justify-center">
          <svg width="9" height="6" viewBox="0 0 9 6" fill="none" stroke="#c9d1d8"><path d="M.5 5l4-4 4 4" /></svg>
        </button>
        <button aria-label="Volume" className="flex w-[25px] justify-center">
          <svg width="13" height="11" viewBox="0 0 13 11" fill="none" stroke="#aeb8c4"><path d="M.8 3.800h2L5.500 1v9L2.800 7.200h-2zM7.500 3.500q1.200 2 0 4M9.300 2.200q2 3.300 0 6.600M11 1q3 4.500 0 9" /></svg>
        </button>
        <button aria-label="Battery" className="flex w-[25px] justify-center">
          <svg width="13" height="10" viewBox="0 0 13 10" fill="#eef1f4"><path d="M3.500 3H12v1.500h1v3h-1V9H3.500z" /><path d="M.5 0h1v1.500h1V0h1v3L2.500 4.500v3H4v1H1.500v-4L.5 3z" /></svg>
        </button>
        <button aria-label="USB device" className="flex w-[25px] justify-center">
          <svg width="8" height="13" viewBox="0 0 8 13" fill="#eef1f4"><path d="M1 0h6v9h1v2H5v2H3v-2H0V9h1z" /></svg>
        </button>
        <button aria-label="Network" className="flex w-[25px] justify-center">
          <svg width="11" height="11" viewBox="0 0 11 11" fill="none" stroke="#8e9bab"><path d="M.8 10.500A9.700 9.700 0 0 1 10.500.8M3.800 10.500a6.700 6.700 0 0 1 6.700-6.700M6.800 10.500a3.700 3.700 0 0 1 3.700-3.700" /><circle cx="9.800" cy="9.800" r=".6" /></svg>
        </button>
        <button className="w-[26px] text-center leading-[14px]">ENG<br />IN</button>
        <button className="w-[54px] text-center leading-[14px]">12:16 PM<br />5/16/2025</button>
        <button aria-label="Notifications" className="ml-2">
          <svg width="14" height="14" viewBox="0 0 14 14" fill="none" stroke="#b9c2cd"><path d="M5 10.500H.8V1h12.400v6M5 10.500V13l2.500-2.500M8 12.500c0-2.500 2-4.500 5-4.500-.5 3-2 5-5 4.500z" /></svg>
        </button>
      </div>
    </footer>
  );
}

export default function App() {
  return (
    <div className="flex min-h-screen flex-col bg-white font-['Open_Sans','Noto_Sans',sans-serif]">
      <TitleBar />
      <MenuBar />
      <Ribbon />
      <div className="flex flex-1">
        <ViewRail />
        <div className="flex min-w-0 flex-1 flex-col">
          <div className="flex flex-1">
            <main className="min-w-0 flex-1 bg-white">
              <ReportPage />
            </main>
            <FiltersPane />
          </div>
          <PageTabs />
        </div>
        <DataPane />
        <PaneRail />
      </div>
      <StatusBar />
      <Taskbar />
    </div>
  );
}
